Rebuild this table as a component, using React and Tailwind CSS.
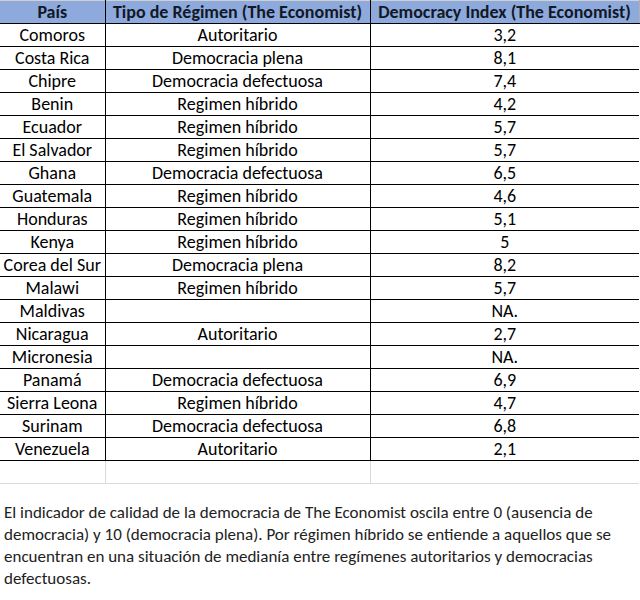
const rows = [
  ['Comoros', 'Autoritario', '3,2'],
  ['Costa Rica', 'Democracia plena', '8,1'],
  ['Chipre', 'Democracia defectuosa', '7,4'],
  ['Benin', 'Regimen híbrido', '4,2'],
  ['Ecuador', 'Regimen híbrido', '5,7'],
  ['El Salvador', 'Regimen híbrido', '5,7'],
  ['Ghana', 'Democracia defectuosa', '6,5'],
  ['Guatemala', 'Regimen híbrido', '4,6'],
  ['Honduras', 'Regimen híbrido', '5,1'],
  ['Kenya', 'Regimen híbrido', '5'],
  ['Corea del Sur', 'Democracia plena', '8,2'],
  ['Malawi', 'Regimen híbrido', '5,7'],
  ['Maldivas', '', 'NA.'],
  ['Nicaragua', 'Autoritario', '2,7'],
  ['Micronesia', '', 'NA.'],
  ['Panamá', 'Democracia defectuosa', '6,9'],
  ['Sierra Leona', 'Regimen híbrido', '4,7'],
  ['Surinam', 'Democracia defectuosa', '6,8'],
  ['Venezuela', 'Autoritario', '2,1'],
];

export default function App() {
  return (
    <div className="w-[640px] h-[600px] bg-white text-black font-['Carlito','Lato','Liberation_Sans',sans-serif]">
      <table className="table-fixed border-collapse w-[639px] text-[18px] leading-none">
        <colgroup>
          <col className="w-[105px]" />
          <col className="w-[265px]" />
          <col className="w-[269px]" />
        </colgroup>
        <thead>
          <tr className="h-[23px] bg-[#8ea9db] font-bold text-[#111827]">
            <th className="border-b border-t border-t-[#d0d0d0] border-b-black border-r border-r-black">País</th>
            <th className="border-b border-t border-t-[#d0d0d0] border-b-black border-r border-r-black">Tipo de Régimen (The Economist)</th>
            <th className="border-b border-t border-t-[#d0d0d0] border-b-black border-r border-r-[#b0b0b0]">Democracy Index (The Economist)</th>
          </tr>
        </thead>
        <tbody>
          {rows.map((r) => (
            <tr key={r[0]} className="h-[23px] text-center">
              <td className="border-b border-black border-r whitespace-nowrap">{r[0]}</td>
              <td className="border-b border-black border-r">{r[1]}</td>
              <td className="border-b border-black">{r[2]}</td>
            </tr>
          ))}
          <tr className="h-[23px]">
            <td className="border-b border-r border-[#d9d9d9]"></td>
            <td className="border-b border-r border-[#d9d9d9]"></td>
            <td className="border-b border-[#d9d9d9]"></td>
          </tr>
        </tbody>
      </table>
      <p className="mt-[18px] pl-1 pr-2 text-[17px] leading-[22px] text-[#222]">
        El indicador de calidad de la democracia de The Economist oscila entre 0 (ausencia de democracia) y 10 (democracia plena). Por régimen híbrido se entiende a aquellos que se encuentran en una situación de medianía entre regímenes autoritarios y democracias defectuosas.
      </p>
    </div>
  );
}
